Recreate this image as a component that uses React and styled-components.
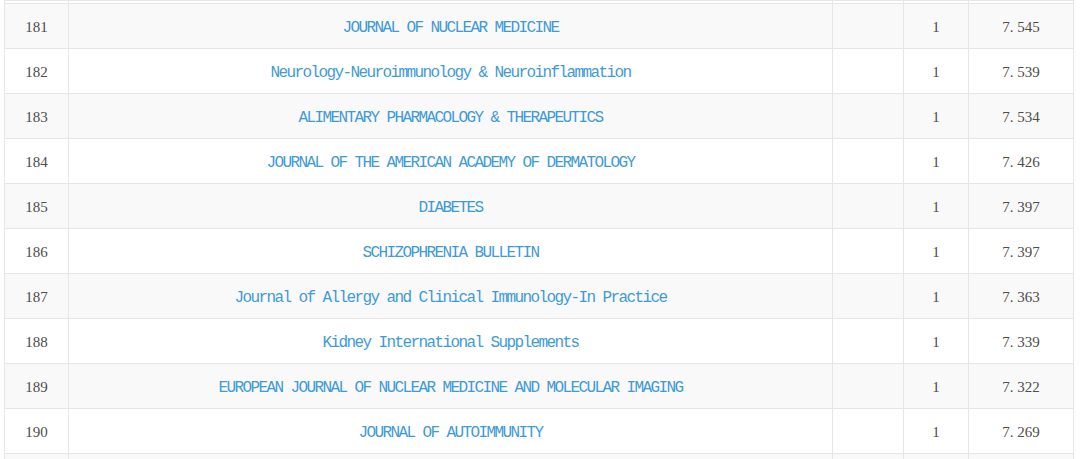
import React from "react";
import styled, { createGlobalStyle } from "styled-components";

const GlobalStyle = createGlobalStyle`
  html, body {
    margin: 0;
    padding: 0;
    background: #ffffff;
    overflow: hidden;
  }
`;

const rows = [
  { rank: 181, name: "JOURNAL OF NUCLEAR MEDICINE", count: 1, score: "7. 545" },
  { rank: 182, name: "Neurology-Neuroimmunology & Neuroinflammation", count: 1, score: "7. 539" },
  { rank: 183, name: "ALIMENTARY PHARMACOLOGY & THERAPEUTICS", count: 1, score: "7. 534" },
  { rank: 184, name: "JOURNAL OF THE AMERICAN ACADEMY OF DERMATOLOGY", count: 1, score: "7. 426" },
  { rank: 185, name: "DIABETES", count: 1, score: "7. 397" },
  { rank: 186, name: "SCHIZOPHRENIA BULLETIN", count: 1, score: "7. 397" },
  { rank: 187, name: "Journal of Allergy and Clinical Immunology-In Practice", count: 1, score: "7. 363" },
  { rank: 188, name: "Kidney International Supplements", count: 1, score: "7. 339" },
  { rank: 189, name: "EUROPEAN JOURNAL OF NUCLEAR MEDICINE AND MOLECULAR IMAGING", count: 1, score: "7. 322" },
  { rank: 190, name: "JOURNAL OF AUTOIMMUNITY", count: 1, score: "7. 269" },
];

const Page = styled.div`
  height: 459px;
  padding-left: 4px;
  overflow: hidden;
`;

const Table = styled.table`
  width: 1069px;
  border-collapse: collapse;
  table-layout: fixed;
`;

const Row = styled.tr`
  background: ${(p) => (p.$striped ? "#f9f9f9" : "#ffffff")};
`;

const Cell = styled.td`
  height: ${(p) => (p.$cut ? "3px" : "45px")};
  padding: ${(p) => (p.$cut ? "0" : "3px 0 0")};
  box-sizing: border-box;
  border: 1px solid #e6e6e6;
  text-align: center;
  vertical-align: middle;
  font-family: "Liberation Serif", "DejaVu Serif", serif;
  font-size: 15px;
  color: #4d4d4d;
  white-space: nowrap;
  overflow: hidden;
`;

const Journal = styled.a`
  font-family: "Liberation Mono", "DejaVu Sans Mono", monospace;
  font-size: 16px;
  letter-spacing: -1.6px;
  vertical-align: -1px;
  color: #3f9ad8;
  text-decoration: none;
`;

const widths = [64, 764, 71, 65, 105];

const BlankRow = ({ cut, striped }) => (
  <Row $striped={striped}>
    {widths.map((w, i) => (
      <Cell key={i} $cut={cut} />
    ))}
  </Row>
);

export default function App() {
  return (
    <>
      <GlobalStyle />
      <Page>
        <Table>
          <colgroup>
            {widths.map((w, i) => (
              <col key={i} style={{ width: w }} />
            ))}
          </colgroup>
          <tbody>
            <BlankRow cut />
            {rows.map((r, i) => (
              <Row key={r.rank} $striped={i % 2 === 0}>
                <Cell>{r.rank}</Cell>
                <Cell>
                  <Journal href="#">{r.name}</Journal>
                </Cell>
                <Cell />
                <Cell>{r.count}</Cell>
                <Cell>{r.score}</Cell>
              </Row>
            ))}
            <BlankRow striped />
          </tbody>
        </Table>
      </Page>
    </>
  );
}
